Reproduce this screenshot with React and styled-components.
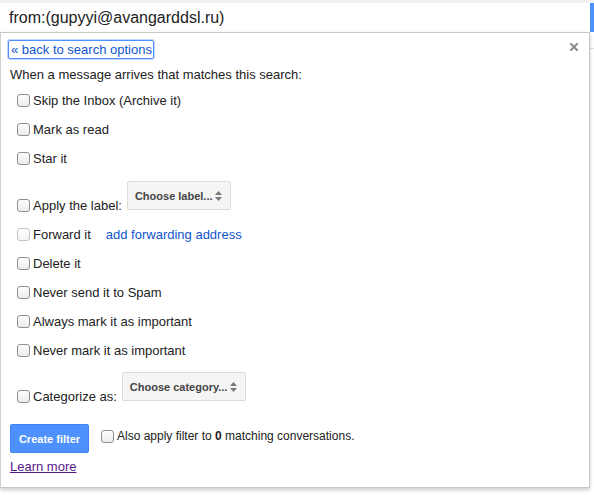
import React from 'react'
import styled, { createGlobalStyle } from 'styled-components'

const Global = createGlobalStyle`
    html, body {
        margin: 0;
        padding: 0;
        background: #fff;
    }
    body {
        font-family: "Liberation Sans", Arial, sans-serif;
        font-size: 13px;
        color: #222;
    }
`

const actions = [
    { text: 'Skip the Inbox (Archive it)' },
    { text: 'Mark as read' },
    { text: 'Star it' },
    { text: 'Apply the label:', select: 'Choose label...', selectWidth: 104 },
    { text: 'Forward it', link: 'add forwarding address', disabled: true },
    { text: 'Delete it' },
    { text: 'Never send it to Spam' },
    { text: 'Always mark it as important' },
    { text: 'Never mark it as important' },
    { text: 'Categorize as:', select: 'Choose category...', selectWidth: 124 },
]

function Arrows() {
    return (
        <svg width="7" height="10" viewBox="0 0 7 10">
            <path d="M3.5 0 L7 4 L0 4 Z" fill="#777" />
            <path d="M0 6 L7 6 L3.5 10 Z" fill="#777" />
        </svg>
    )
}

function Dropdown({ label, width }) {
    return (
        <Select type="button" $width={width}>
            <span>{label}</span>
            <Arrows />
        </Select>
    )
}

class App extends React.Component {

    render() {
        return(
            <Page>
                <Global />
                <TopStrip />
                <SearchRow>
                    <SearchText>from:(gupyyi@avangarddsl.ru)</SearchText>
                    <BlueTab />
                </SearchRow>

                <Panel>
                    <Header>
                        <BackLink href="#">« back to search options</BackLink>
                        <Close aria-label="close">
                            <svg width="8" height="8" viewBox="0 0 8 8">
                                <path d="M1 1 L7 7 M7 1 L1 7" stroke="#8c8c8c" strokeWidth="2" strokeLinecap="square" />
                            </svg>
                        </Close>
                    </Header>

                    <Intro>When a message arrives that matches this search:</Intro>

                    <List>
                        {actions.map(a => (
                            <Row key={a.text} $tall={!!a.select}>
                                <Option>
                                    <Check type="checkbox" disabled={a.disabled} />
                                    <Label>{a.text}</Label>
                                </Option>
                                {a.select && <Dropdown label={a.select} width={a.selectWidth} />}
                                {a.link && <BlueLink href="#">{a.link}</BlueLink>}
                            </Row>
                        ))}
                    </List>

                    <Footer>
                        <CreateButton type="button">Create filter</CreateButton>
                        <AlsoApply>
                            <Check type="checkbox" />
                            <Label>Also apply filter to <b>0</b> matching conversations.</Label>
                        </AlsoApply>
                    </Footer>

                    <LearnMore href="#">Learn more</LearnMore>
                </Panel>
                <SideLine />
            </Page>
        )
    }
}

export default App

const Page = styled.div`
    position: relative;
    width: 594px;
    height: 495px;
    overflow: hidden;
    background: #fff;
`

const TopStrip = styled.div`
    height: 3px;
    background: #f1f1f1;
`

const SearchRow = styled.div`
    display: flex;
    height: 29px;
    align-items: stretch;
`

const SearchText = styled.div`
    flex: 1;
    padding-left: 9px;
    font-size: 16px;
    line-height: 29px;
    color: #222;
`

const BlueTab = styled.div`
    width: 4px;
    background: #4d90fe;
`

const Panel = styled.div`
    position: relative;
    z-index: 1;
    box-sizing: border-box;
    width: 590px;
    height: 456px;
    border: 1px solid #c8c8c8;
    border-left-color: #d0d0d0;
    background: #fff;
    box-shadow: 0 2px 4px rgba(0, 0, 0, 0.2);
    padding: 7px 10px 0 7px;
`

const Header = styled.div`
    display: flex;
    justify-content: space-between;
    align-items: flex-start;
    height: 20px;
`

const BackLink = styled.a`
    display: inline-block;
    height: 17px;
    line-height: 17px;
    padding: 0 1px 0 2px;
    color: #1155cc;
    text-decoration: none;
    border: 1px solid #4d90fe;
    border-radius: 2px;
    box-shadow: 0 0 0 1px #c3d6fb;
`

const Close = styled.span`
    display: flex;
    margin: 3px 1px 0 0;
    cursor: pointer;
`

const Intro = styled.div`
    margin-top: 6px;
    padding-left: 2px;
    line-height: 17px;
`

const List = styled.div`
    margin-top: 3px;
    padding-left: 9px;
    display: flex;
    flex-direction: column;
`

const Row = styled.div`
    display: flex;
    align-items: ${p => (p.$tall ? 'flex-end' : 'center')};
    height: ${p => (p.$tall ? '47px' : '29px')};
    padding-bottom: ${p => (p.$tall ? '7px' : '0')};
    box-sizing: border-box;
    &:last-child {
        height: 46px;
    }
`

const Option = styled.label`
    display: flex;
    align-items: center;
    height: 15px;
`

const Check = styled.input`
    appearance: none;
    box-sizing: border-box;
    width: 13px;
    height: 13px;
    margin: 0 3px 0 0;
    flex-shrink: 0;
    border: 1px solid #8f8f8f;
    border-radius: 3px;
    background: linear-gradient(#fdfdfd, #ececec);

    &:disabled {
        border-color: #c4c4c4;
        background: linear-gradient(#fff, #f4f4f4);
    }
`

const Label = styled.span`
    line-height: 15px;
    white-space: nowrap;
`

const Select = styled.button`
    display: flex;
    align-items: center;
    justify-content: space-between;
    box-sizing: border-box;
    width: ${p => p.$width}px;
    height: 29px;
    margin: 0 0 3px 5px;
    padding: 0 8px 0 7px;
    background: #f5f5f5;
    border: 1px solid #dcdcdc;
    border-radius: 2px;
    font-family: "Liberation Sans", Arial, sans-serif;
    font-size: 11px;
    font-weight: bold;
    color: #444;
`

const BlueLink = styled.a`
    margin-left: 15px;
    color: #1155cc;
    text-decoration: none;
    line-height: 15px;
`

const Footer = styled.div`
    display: flex;
    align-items: flex-start;
    margin-top: 13px;
    padding-left: 2px;
`

const CreateButton = styled.button`
    box-sizing: border-box;
    width: 79px;
    height: 29px;
    padding: 0;
    background: #4d90fe;
    border: 1px solid #3e84f4;
    border-radius: 2px;
    color: #fff;
    font-family: "Liberation Sans", Arial, sans-serif;
    font-size: 11px;
    font-weight: bold;
`

const AlsoApply = styled.label`
    display: flex;
    align-items: center;
    height: 20px;
    margin: 2px 0 0 12px;
    font-size: 12px;

    b {
        font-weight: bold;
    }
`

const LearnMore = styled.a`
    display: inline-block;
    margin: 6px 0 0 2px;
    line-height: 15px;
    color: #551a8b;
    text-decoration: underline;
`

const SideLine = styled.div`
    position: absolute;
    top: 48px;
    right: 0;
    width: 4px;
    height: 1px;
    background: #e0e0e0;
`
